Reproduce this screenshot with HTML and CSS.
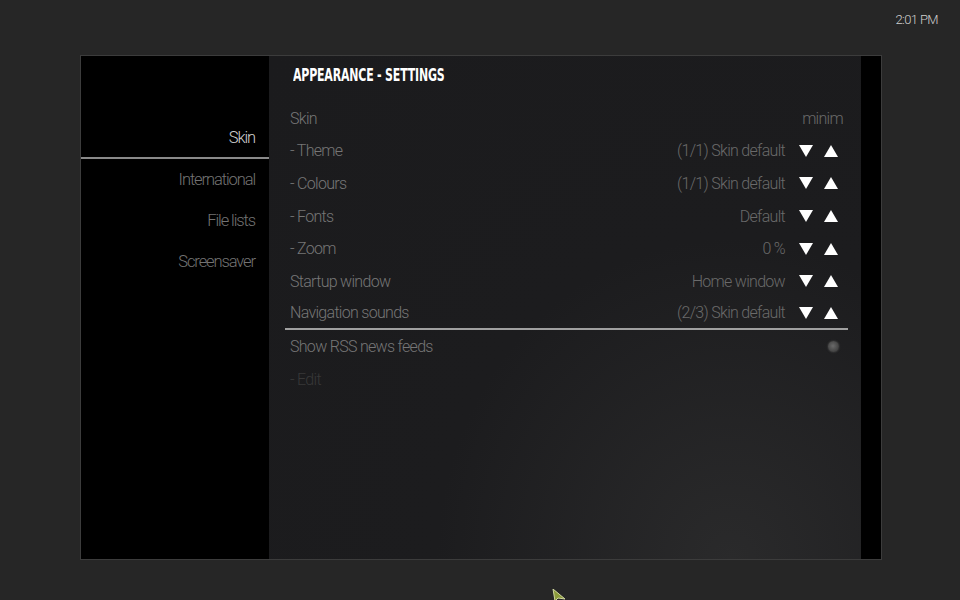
FILE: index.html
```html
<!DOCTYPE html>
<html lang="en">
<head>
  <meta charset="UTF-8" />
  <title>Appearance - Settings</title>
  <link rel="stylesheet" href="styles.css">
</head>
<body>
  <div class="topbar">
    <span class="clock">2:01 PM</span>
  </div>

  <div class="frame">
    <div class="sidebar">
      <div class="cat selected">Skin</div>
      <div class="cat">International</div>
      <div class="cat">File lists</div>
      <div class="cat">Screensaver</div>
    </div>

    <div class="main">
      <h1 class="title"><span>APPEARANCE - SETTINGS</span></h1>

      <div class="list">
        <div class="row">
          <span class="label">Skin</span>
          <span class="value">minim</span>
        </div>
        <div class="row">
          <span class="label">- Theme</span>
          <span class="value">(1/1) Skin default</span>
          <span class="spin"><i class="down"></i><i class="up"></i></span>
        </div>
        <div class="row">
          <span class="label">- Colours</span>
          <span class="value">(1/1) Skin default</span>
          <span class="spin"><i class="down"></i><i class="up"></i></span>
        </div>
        <div class="row">
          <span class="label">- Fonts</span>
          <span class="value">Default</span>
          <span class="spin"><i class="down"></i><i class="up"></i></span>
        </div>
        <div class="row">
          <span class="label">- Zoom</span>
          <span class="value">0 %</span>
          <span class="spin"><i class="down"></i><i class="up"></i></span>
        </div>
        <div class="row">
          <span class="label">Startup window</span>
          <span class="value">Home window</span>
          <span class="spin"><i class="down"></i><i class="up"></i></span>
        </div>
        <div class="row focused">
          <span class="label">Navigation sounds</span>
          <span class="value">(2/3) Skin default</span>
          <span class="spin"><i class="down"></i><i class="up"></i></span>
        </div>
        <div class="row">
          <span class="label">Show RSS news feeds</span>
          <span class="radio"></span>
        </div>
        <div class="row disabled">
          <span class="label">- Edit</span>
        </div>
      </div>
    </div>

    <div class="strip"></div>
  </div>

  <svg class="pointer" width="14" height="12" viewBox="0 0 14 12">
    <path d="M1 0 L13 10 L6 9 L3 12 Z" fill="#8a9a3a" stroke="#cfd6a0" stroke-width="1"/>
  </svg>
</body>
</html>
```

FILE: styles.css
```css
body {
  margin: 0;
  background: #262626;
  font-family: Roboto, "Liberation Sans", sans-serif;
  font-weight: 300;
  overflow: hidden;
}

.topbar {
  height: 55px;
  display: flex;
  justify-content: flex-end;
  padding-right: 22px;
  box-sizing: border-box;
}

.clock {
  margin-top: 12px;
  color: #cfcfcf;
  font-size: 13px;
  letter-spacing: -0.6px;
}

.frame {
  margin-left: 80px;
  width: 802px;
  height: 505px;
  box-sizing: border-box;
  border: 1px solid #3c3c3c;
  display: flex;
}

.sidebar {
  width: 188px;
  background: #000;
  padding-top: 63px;
  box-sizing: border-box;
}

.cat {
  height: 41px;
  line-height: 41px;
  text-align: right;
  padding-right: 14px;
  color: #737373;
  font-size: 16.5px;
  letter-spacing: -1.1px;
  box-sizing: border-box;
}

.cat.selected {
  color: #cfcfcf;
  border-bottom: 2px solid #8a8a8a;
  height: 40px;
  line-height: 38px;
}

.main {
  flex: 1;
  background: radial-gradient(ellipse at 78% 100%, #2a2a2b 0%, #1c1c1e 45%, #1b1b1d 100%);
  display: flex;
  flex-direction: column;
}

.title {
  margin: 0;
  height: 46px;
  padding: 8px 0 0 24px;
  box-sizing: border-box;
  color: #fff;
  font-family: "DejaVu Sans", sans-serif;
  font-weight: bold;
  font-size: 18px;
  letter-spacing: -0.3px;
  white-space: nowrap;
}

.title span {
  display: inline-block;
  transform: scaleX(0.61);
  transform-origin: 0 0;
}

.list {
  margin: 0 13px 0 16px;
}

.row {
  height: 32.6px;
  display: flex;
  align-items: center;
  padding: 0 5px;
  font-size: 16px;
  letter-spacing: -0.7px;
  box-sizing: border-box;
}

.row.focused {
  border-bottom: 2px solid #a0a0a0;
}

.label {
  flex: 1;
  color: #767676;
}

.value {
  color: #6a6a6a;
}

.row.disabled .label {
  color: #383838;
}

.spin {
  display: flex;
  gap: 11px;
  margin: 0 5px 0 14px;
}

.spin i {
  width: 0;
  height: 0;
  border-left: 7px solid transparent;
  border-right: 7px solid transparent;
}

.spin .down {
  border-top: 12px solid #fff;
}

.spin .up {
  border-bottom: 12px solid #fff;
}

.radio {
  width: 11px;
  height: 11px;
  margin-right: 4px;
  border-radius: 50%;
  background: radial-gradient(circle at 45% 45%, #6a6a6a 0%, #4a4a4a 55%, #2e2e2e 100%);
  box-shadow: 0 0 2px #555;
}

.strip {
  width: 20px;
  background: #000;
}

.pointer {
  position: absolute;
  left: 552px;
  top: 589px;
}
```
